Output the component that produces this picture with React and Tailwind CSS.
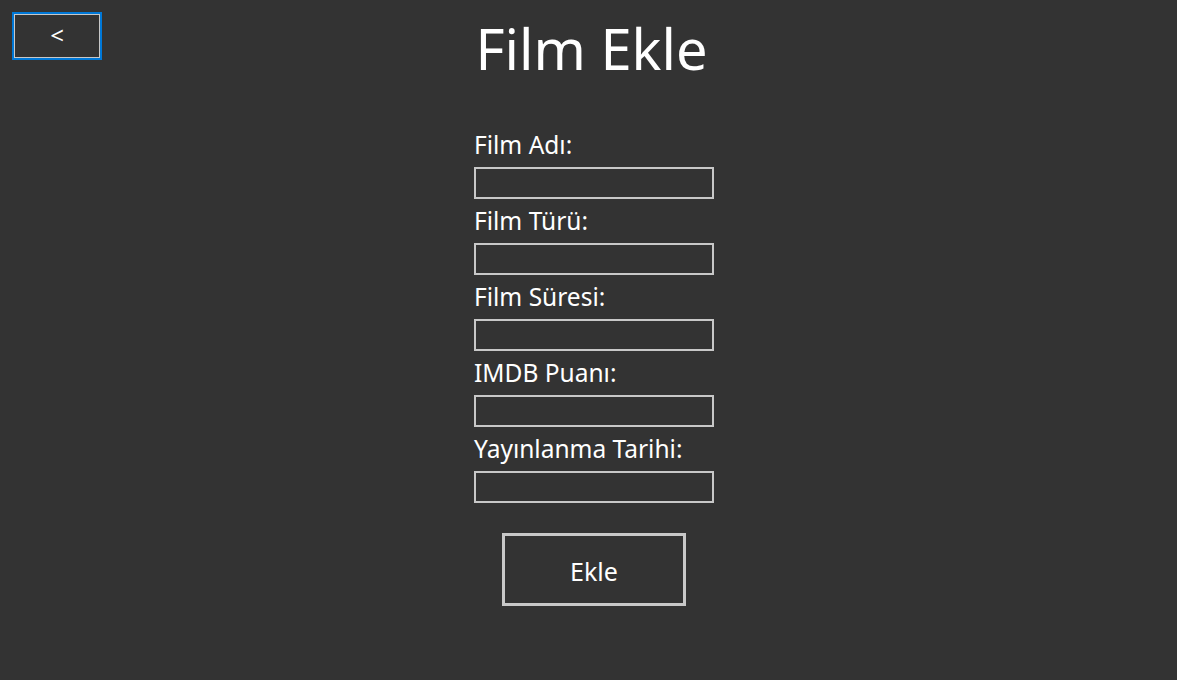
import React from 'react';

const fields = ["Film Adı:", "Film Türü:", "Film Süresi:", "IMDB Puanı:", "Yayınlanma Tarihi:"];

const App = () => {
  return (
    <div
      className="w-full h-[680px] bg-[#333333] text-white overflow-hidden"
      style={{ fontFamily: '"Noto Sans", "Open Sans", sans-serif' }}
    >
      {/* üst kısım: geri butonu ve başlık */}
      <div className="grid grid-cols-[1fr_auto_1fr] pt-3">
        <div>
          <button className="ml-3 w-[90px] h-[48px] border-2 border-[#0078d7] shadow-[inset_0_0_0_1px_#c8c8c8] text-white text-[24px] leading-none flex items-center justify-center pb-[2px]">
            &lt;
          </button>
        </div>
        <h1 className="text-[56px] leading-[64px] pl-[6px] pt-[4px]">Film Ekle</h1>
        <div />
      </div>

      {/* form */}
      <div className="flex flex-col items-center pl-[11px] mt-[43px]">
        <div className="w-[240px] flex flex-col">
          {fields.map((label) => (
            <div key={label} className="flex flex-col">
              <span className="text-[24.5px] leading-[44px] whitespace-nowrap">{label}</span>
              <div className="h-[32px] border-2 border-[#c8c8c8]" />
            </div>
          ))}
        </div>
        <button className="mt-[30px] w-[184px] h-[73px] border-[3px] border-[#c8c8c8] text-white text-[25px] pt-[4px]">
          Ekle
        </button>
      </div>
    </div>
  );
};

export default App;
